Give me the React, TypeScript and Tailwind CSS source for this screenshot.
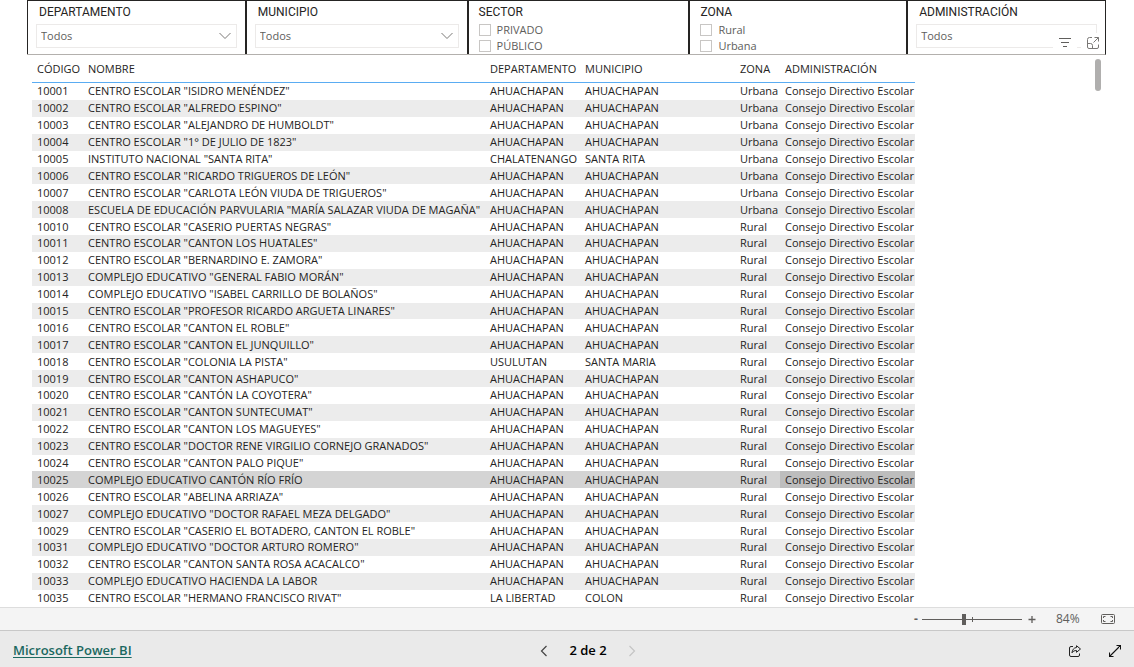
import type { ReactNode } from "react"
import { clsx } from "clsx"

type Row = [code: string, name: string, department: string, town: string, zone: string]

const ROWS: Row[] = [
  ["10001", 'CENTRO ESCOLAR "ISIDRO MENÉNDEZ"', "AHUACHAPAN", "AHUACHAPAN", "Urbana"],
  ["10002", 'CENTRO ESCOLAR "ALFREDO ESPINO"', "AHUACHAPAN", "AHUACHAPAN", "Urbana"],
  ["10003", 'CENTRO ESCOLAR "ALEJANDRO DE HUMBOLDT"', "AHUACHAPAN", "AHUACHAPAN", "Urbana"],
  ["10004", 'CENTRO ESCOLAR "1° DE JULIO DE 1823"', "AHUACHAPAN", "AHUACHAPAN", "Urbana"],
  ["10005", 'INSTITUTO NACIONAL "SANTA RITA"', "CHALATENANGO", "SANTA RITA", "Urbana"],
  ["10006", 'CENTRO ESCOLAR "RICARDO TRIGUEROS DE LEÓN"', "AHUACHAPAN", "AHUACHAPAN", "Urbana"],
  ["10007", 'CENTRO ESCOLAR "CARLOTA LEÓN VIUDA DE TRIGUEROS"', "AHUACHAPAN", "AHUACHAPAN", "Urbana"],
  ["10008", 'ESCUELA DE EDUCACIÓN PARVULARIA "MARÍA SALAZAR VIUDA DE MAGAÑA"', "AHUACHAPAN", "AHUACHAPAN", "Urbana"],
  ["10010", 'CENTRO ESCOLAR "CASERIO PUERTAS NEGRAS"', "AHUACHAPAN", "AHUACHAPAN", "Rural"],
  ["10011", 'CENTRO ESCOLAR "CANTON LOS HUATALES"', "AHUACHAPAN", "AHUACHAPAN", "Rural"],
  ["10012", 'CENTRO ESCOLAR "BERNARDINO E. ZAMORA"', "AHUACHAPAN", "AHUACHAPAN", "Rural"],
  ["10013", 'COMPLEJO EDUCATIVO "GENERAL FABIO MORÁN"', "AHUACHAPAN", "AHUACHAPAN", "Rural"],
  ["10014", 'COMPLEJO EDUCATIVO "ISABEL CARRILLO DE BOLAÑOS"', "AHUACHAPAN", "AHUACHAPAN", "Rural"],
  ["10015", 'CENTRO ESCOLAR "PROFESOR RICARDO ARGUETA LINARES"', "AHUACHAPAN", "AHUACHAPAN", "Rural"],
  ["10016", 'CENTRO ESCOLAR "CANTON EL ROBLE"', "AHUACHAPAN", "AHUACHAPAN", "Rural"],
  ["10017", 'CENTRO ESCOLAR "CANTON EL JUNQUILLO"', "AHUACHAPAN", "AHUACHAPAN", "Rural"],
  ["10018", 'CENTRO ESCOLAR "COLONIA LA PISTA"', "USULUTAN", "SANTA MARIA", "Rural"],
  ["10019", 'CENTRO ESCOLAR "CANTON ASHAPUCO"', "AHUACHAPAN", "AHUACHAPAN", "Rural"],
  ["10020", 'CENTRO ESCOLAR "CANTÓN LA COYOTERA"', "AHUACHAPAN", "AHUACHAPAN", "Rural"],
  ["10021", 'CENTRO ESCOLAR "CANTON SUNTECUMAT"', "AHUACHAPAN", "AHUACHAPAN", "Rural"],
  ["10022", 'CENTRO ESCOLAR "CANTON LOS MAGUEYES"', "AHUACHAPAN", "AHUACHAPAN", "Rural"],
  ["10023", 'CENTRO ESCOLAR "DOCTOR RENE VIRGILIO CORNEJO GRANADOS"', "AHUACHAPAN", "AHUACHAPAN", "Rural"],
  ["10024", 'CENTRO ESCOLAR "CANTON PALO PIQUE"', "AHUACHAPAN", "AHUACHAPAN", "Rural"],
  ["10025", "COMPLEJO EDUCATIVO CANTÓN RÍO FRÍO", "AHUACHAPAN", "AHUACHAPAN", "Rural"],
  ["10026", 'CENTRO ESCOLAR "ABELINA ARRIAZA"', "AHUACHAPAN", "AHUACHAPAN", "Rural"],
  ["10027", 'COMPLEJO EDUCATIVO "DOCTOR RAFAEL MEZA DELGADO"', "AHUACHAPAN", "AHUACHAPAN", "Rural"],
  ["10029", 'CENTRO ESCOLAR "CASERIO EL BOTADERO, CANTON EL ROBLE"', "AHUACHAPAN", "AHUACHAPAN", "Rural"],
  ["10031", 'COMPLEJO EDUCATIVO "DOCTOR ARTURO ROMERO"', "AHUACHAPAN", "AHUACHAPAN", "Rural"],
  ["10032", 'CENTRO ESCOLAR "CANTON SANTA ROSA ACACALCO"', "AHUACHAPAN", "AHUACHAPAN", "Rural"],
  ["10033", "COMPLEJO EDUCATIVO HACIENDA LA LABOR", "AHUACHAPAN", "AHUACHAPAN", "Rural"],
  ["10035", 'CENTRO ESCOLAR "HERMANO FRANCISCO RIVAT"', "LA LIBERTAD", "COLON", "Rural"],
]

const HEADERS = ["CÓDIGO", "NOMBRE", "DEPARTAMENTO", "MUNICIPIO", "ZONA", "ADMINISTRACIÓN"]
const SELECTED = "10025"
const SLICER = "relative border-l-2 border-[#252423] pt-[3px] first:border-l"
const TITLE = "block font-['Roboto',sans-serif] text-xs leading-4 text-[#252423]"

function SelectSlicer({ id, title, chevron = true, children }: { id: string; title: string; chevron?: boolean; children?: ReactNode }) {
  return (
    <div className={clsx(SLICER, "px-2")}>
      <label htmlFor={id} className={clsx(TITLE, "pl-[3px]")}>
        {title}
      </label>
      <div className="relative mt-1">
        <select
          id={id}
          className="block h-6 w-full appearance-none border border-[#eceae9] bg-white pl-1 text-[11px] text-[#605e5c]"
        >
          <option>Todos</option>
        </select>
        {chevron && (
          <svg className="pointer-events-none absolute top-2 right-1.5 h-2 w-3" viewBox="0 0 12 8" fill="none" stroke="#7a7876">
            <path d="M0.500 1L6 6.500 11.500 1" />
          </svg>
        )}
      </div>
      {children}
    </div>
  )
}

function CheckSlicer({ id, title, options }: { id: string; title: string; options: string[] }) {
  return (
    <div role="group" aria-labelledby={id} className={clsx(SLICER, "pl-2.5")}>
      <span id={id} className={TITLE}>
        {title}
      </span>
      <div className="pt-0.5">
        {options.map((option) => (
          <label key={option} className="flex h-4 items-center gap-1.5 text-[11px] leading-4 text-[#605e5c]">
            <input type="checkbox" className="size-3 appearance-none border border-[#c8c6c4] bg-white checked:bg-[#605e5c]" />
            {option}
          </label>
        ))}
      </div>
    </div>
  )
}

function Filters() {
  return (
    <div className="mr-7 ml-[27px] grid h-[55px] shrink-0 grid-cols-[218fr_222fr_222fr_218fr_199fr] border-t border-r border-b border-t-[#252423] border-r-[#252423] border-b-[#b3b0ad]">
      <SelectSlicer id="departamento" title="DEPARTAMENTO" />
      <SelectSlicer id="municipio" title="MUNICIPIO" />
      <CheckSlicer id="sector" title="SECTOR" options={["PRIVADO", "PÚBLICO"]} />
      <CheckSlicer id="zona" title="ZONA" options={["Rural", "Urbana"]} />
      <SelectSlicer id="administracion" title="ADMINISTRACIÓN" chevron={false}>
        {/* Visual header icons float over the slicer */}
        <div className="absolute right-0 bottom-px flex gap-1">
          <button type="button" aria-label="Filtros" className="flex h-5 w-6 items-center justify-center bg-white">
            <svg className="h-3 w-3" viewBox="0 0 12 12" fill="none" stroke="#605e5c">
              <path d="M0 1.500h12M2 5.500h8M4 9.500h4" />
            </svg>
          </button>
          <button type="button" aria-label="Modo de enfoque" className="flex h-5 w-6 items-center justify-center bg-white">
            <svg className="h-3.5 w-3.5" viewBox="0 0 14 14" fill="none" stroke="#7a7876">
              <path d="M6 1.500H3.500a2 2 0 0 0-2 2V11a1.500 1.500 0 0 0 1.500 1.500h8a1.500 1.500 0 0 0 1.500-1.500V8.500" />
              <path d="M8.500 1.500h4V5.500M12.500 1.500L7.500 6.500M1.500 7.500h3a2 2 0 0 1 2 2v3" />
            </svg>
          </button>
        </div>
      </SelectSlicer>
    </div>
  )
}

function SchoolTable() {
  return (
    <div className="flex min-h-0 flex-1 items-start justify-between pr-[33px] pl-8">
      <table className="h-full w-[883px] table-fixed border-separate border-spacing-0 text-left text-[11px] leading-4 text-[#252423]">
        <colgroup>
          <col className="w-[51px]" />
          <col className="w-[402px]" />
          <col className="w-[95px]" />
          <col className="w-[155px]" />
          <col className="w-[45px]" />
          <col className="w-[135px]" />
        </colgroup>
        <thead>
          <tr className="h-7">
            {HEADERS.map((header) => (
              <th key={header} scope="col" className="border-b border-[#5aacf2] px-[5px] py-0 font-normal whitespace-nowrap">
                {header}
              </th>
            ))}
          </tr>
        </thead>
        <tbody>
          {ROWS.map((row) => {
            const selected = row[0] === SELECTED
            return (
              <tr key={row[0]} className={selected ? "bg-[#d4d4d4]" : "even:bg-[#ececec]"}>
                {row.map((cell, i) => (
                  <td key={i} className="px-[5px] py-0 whitespace-nowrap">
                    {cell}
                  </td>
                ))}
                <td className={clsx("px-[5px] py-0 whitespace-nowrap", selected && "bg-[#bdbdbd]")}>
                  Consejo Directivo Escolar
                </td>
              </tr>
            )
          })}
        </tbody>
      </table>
      <div className="mt-1 h-8 w-1.5 rounded-full bg-[#b0afae]" />
    </div>
  )
}

function ZoomBar() {
  return (
    <div className="flex h-[23px] shrink-0 items-center justify-end border-t border-[#dddddd] bg-[#f4f4f4] pr-[19px] text-xs text-[#605e5c]">
      <button type="button" aria-label="Alejar" className="w-3 font-bold">
        -
      </button>
      <div className="relative flex h-4 w-[100px] items-center">
        <input
          type="range"
          aria-label="Zoom"
          min={0}
          max={100}
          defaultValue={42}
          className="h-3 w-full appearance-none bg-transparent [&::-webkit-slider-runnable-track]:h-px [&::-webkit-slider-runnable-track]:bg-[#605e5c] [&::-webkit-slider-thumb]:-mt-[5px] [&::-webkit-slider-thumb]:h-[11px] [&::-webkit-slider-thumb]:w-1 [&::-webkit-slider-thumb]:appearance-none [&::-webkit-slider-thumb]:bg-[#605e5c]"
        />
        <span className="pointer-events-none absolute left-1/2 h-[5px] w-px bg-[#605e5c]" />
      </div>
      <button type="button" aria-label="Acercar" className="ml-1.5 flex size-2 items-center justify-center">
        <svg className="size-2" viewBox="0 0 8 8" stroke="#605e5c" strokeWidth="1.3">
          <path d="M0.500 4.500h7M4 1v7" />
        </svg>
      </button>
      <span className="ml-5 w-6">84%</span>
      <button type="button" aria-label="Ajustar a la página" className="ml-[21px]">
        <svg className="h-2.5 w-3.5" viewBox="0 0 14 10" fill="none" stroke="#605e5c">
          <rect x="0.500" y="0.500" width="13" height="9" rx="1" />
          <path d="M2.500 4V2.500H4.500M9.500 2.500h2V4M11.500 6v1.500h-2M4.500 7.500h-2V6" />
        </svg>
      </button>
    </div>
  )
}

function Footer() {
  return (
    <footer className="grid h-[37px] shrink-0 grid-cols-[1fr_auto_1fr] items-center border-t border-[#c8c8c8] bg-[#eaeaea] px-[13px] pt-1">
      <a href="#" className="justify-self-start text-[13px] font-semibold text-[#1b6860] underline underline-offset-2">
        Microsoft Power BI
      </a>
      <nav className="ml-[42px] flex items-center gap-[21px]" aria-label="Páginas">
        <button type="button" aria-label="Página anterior">
          <svg className="h-3 w-2" viewBox="0 0 8 12" fill="none" stroke="#444444" strokeWidth="1.2">
            <path d="M6.500 1L1.500 6l5 5" />
          </svg>
        </button>
        <span className="text-[13px] font-semibold text-black">2 de 2</span>
        <button type="button" aria-label="Página siguiente" disabled>
          <svg className="h-3 w-2" viewBox="0 0 8 12" fill="none" stroke="#c4c4c4" strokeWidth="1.2">
            <path d="M1.500 1l5 5-5 5" />
          </svg>
        </button>
      </nav>
      <div className="flex items-center gap-7 justify-self-end">
        <button type="button" aria-label="Compartir">
          <svg className="h-3 w-3" viewBox="0 0 12 12" fill="none" stroke="#222222">
            <path d="M4 1.500H2a1.500 1.500 0 0 0-1.500 1.500v7A1.500 1.500 0 0 0 2 11.500h7a1.500 1.500 0 0 0 1.500-1.500V8.500" />
            <path d="M7.500 0.700L11.500 4 7.500 7.300V5.500C5.500 5.500 4 6.200 3 7.800 3.200 5 4.700 2.800 7.500 2.500z" strokeLinejoin="round" />
          </svg>
        </button>
        <button type="button" aria-label="Pantalla completa">
          <svg className="h-3 w-3" viewBox="0 0 12 12" fill="none" stroke="#111111" strokeWidth="1.1">
            <path d="M7.500 0.500h4v4M11.500 0.500l-11 11M0.500 7.500v4h4" />
          </svg>
        </button>
      </div>
    </footer>
  )
}

export default function App() {
  return (
    <div className="flex h-screen flex-col bg-white font-['Open_Sans','Noto_Sans',sans-serif]">
      <Filters />
      <SchoolTable />
      <ZoomBar />
      <Footer />
    </div>
  )
}
